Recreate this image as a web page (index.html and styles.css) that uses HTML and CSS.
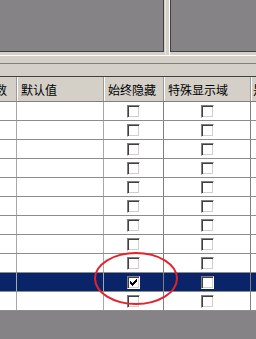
FILE: index.html
```html
<!DOCTYPE html>
<html>
	<head>
		<meta charset="UTF-8">
		<title></title>
		<link rel="stylesheet" href="styles.css">
	</head>
	<body>
		<div class="top">
			<div class="pane"></div>
			<div class="splitter"></div>
			<div class="pane pane-right"></div>
		</div>
		<div class="sep"></div>
		<div class="bar"></div>
		<div class="grid">
			<div class="hd"><span class="cut">数</span></div>
			<div class="hd">默认值</div>
			<div class="hd">始终隐藏</div>
			<div class="hd">特殊显示域</div>
			<div class="hd hd-last">是</div>
		</div>
		<div class="rows" id="rows">
			<div class="mark"></div>
		</div>
		<div class="rest"></div>
		<script type="text/javascript">
			var rows = document.getElementById("rows");
			for (var i = 0; i < 11; i++) {
				var row = document.createElement("div");
				row.className = i == 9 ? "row sel" : "row";
				var check = i == 9 ? '<svg width="11" height="11" viewBox="1 1 11 11" shape-rendering="crispEdges"><path d="M3 5H4V6H5V7H6V6H7V5H8V4H9V3H10V6H9V7H8V8H7V9H6V10H5V9H4V8H3Z" fill="#000"/></svg>' : '';
				row.innerHTML = '<div class="c"></div><div class="c"></div>'
					+ '<div class="c"><span class="cb">' + check + '</span></div>'
					+ '<div class="c"><span class="cb"></span></div>'
					+ '<div class="c c-last"></div>';
				rows.insertBefore(row, rows.lastElementChild);
			}
		</script>
	</body>
</html>
```

FILE: styles.css
```css
*{
	margin: 0;
	padding: 0;
	box-sizing: border-box;
}
body{
	width: 256px;
	height: 339px;
	overflow: hidden;
	display: flex;
	flex-direction: column;
	background: #d4d0c8;
	font-family: "Noto Sans CJK SC", sans-serif;
	font-size: 12px;
	color: #000;
}
.top{
	height: 52px;
	display: flex;
	flex-shrink: 0;
}
.pane{
	width: 164px;
	height: 52px;
	background: #858385;
	border-right: 1px solid #404040;
	border-bottom: 1px solid #404040;
}
.pane-right{
	flex: 1;
	border-right: none;
	border-left: 1px solid #404040;
}
.splitter{
	width: 5px;
	height: 56px;
	border-left: 1px solid #e8e6e0;
	border-right: 1px solid #fff;
	margin-left: 1px;
}
.sep{
	flex-shrink: 0;
	margin-top: 3px;
	height: 9px;
	border-top: 1px solid #fff;
	border-bottom: 1px solid #808080;
}
.bar{
	flex-shrink: 0;
	height: 13px;
	border-bottom: 1px solid #404040;
}
.grid, .row{
	display: grid;
	grid-template-columns: 17px 87px 60px 87px 1fr;
	flex-shrink: 0;
}
.grid{
	height: 25px;
	border-bottom: 1px solid #808080;
}
.hd{
	display: flex;
	align-items: center;
	padding-left: 4px;
	white-space: nowrap;
	overflow: hidden;
	border-right: 1px solid #9a9a9a;
	box-shadow: inset 1px 0 #fff;
}
.hd:first-child{
	padding-left: 0;
	box-shadow: none;
}
.cut{
	margin-left: -5px;
}
.hd-last{
	padding-left: 2px;
	border-right: none;
}
.rows{
	position: relative;
	flex-shrink: 0;
}
.row{
	height: 19px;
	background: #fff;
	border-bottom: 1px solid #8c8c8c;
}
.row.sel{
	background: #0a246a;
}
.c{
	display: flex;
	align-items: center;
	justify-content: center;
	border-right: 1px solid #a8a8a8;
}
.c:nth-child(3), .c:nth-child(4){
	border-right-color: #808080;
}
.c-last{
	border-right: none;
}
.cb{
	width: 13px;
	height: 13px;
	display: block;
	background: #fff;
	border: 1px solid;
	border-color: #808080 #fff #fff #808080;
	box-shadow: inset 1px 1px #404040, inset -1px -1px #d4d0c8;
}
.cb svg{
	display: block;
}
.mark{
	position: absolute;
	left: 94px;
	top: 150px;
	width: 84px;
	height: 53px;
	border: 2px solid #e4222c;
	border-radius: 50%;
}
.rest{
	flex: 1;
	background: #858385;
}
```
